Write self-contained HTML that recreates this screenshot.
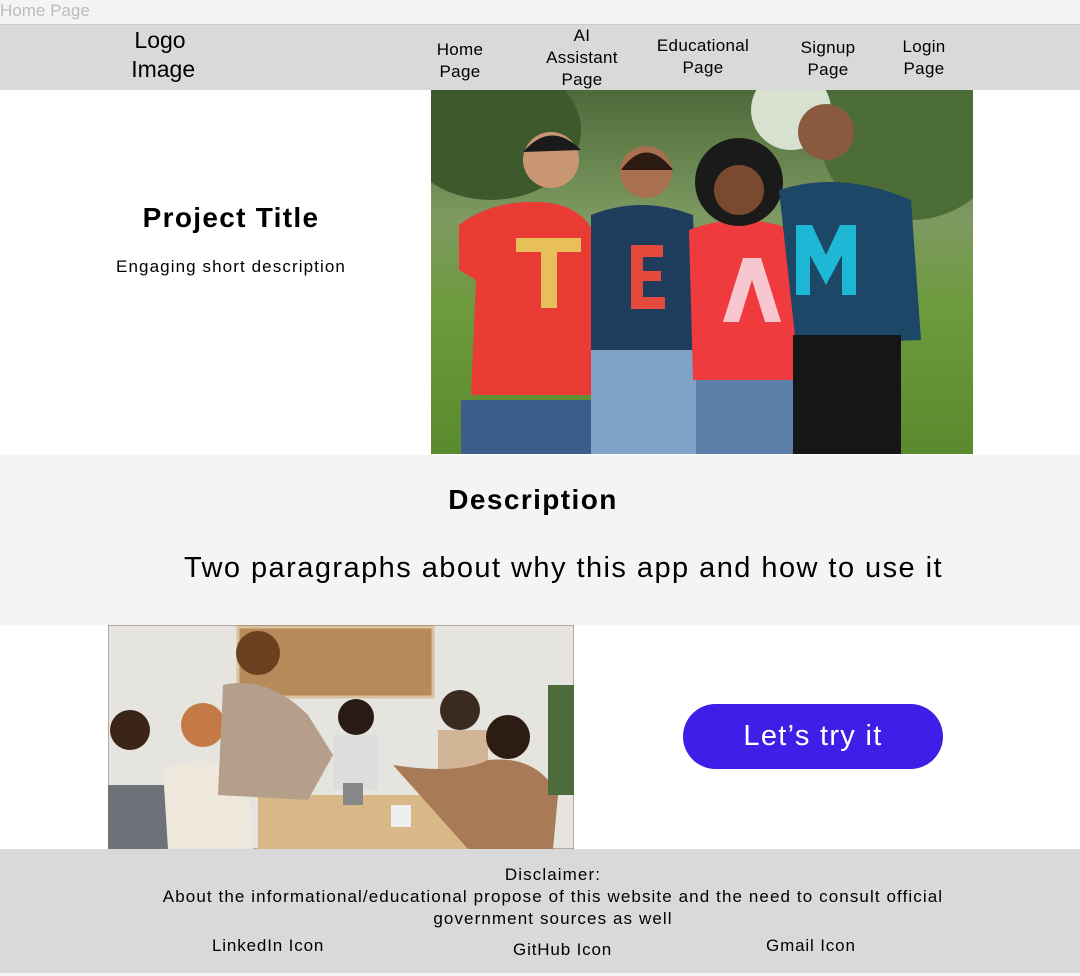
<!DOCTYPE html>
<html><head><meta charset="utf-8"><style>
*{margin:0;padding:0;box-sizing:border-box}
body{width:1080px;height:976px;background:#f4f4f4;font-family:"Liberation Sans",sans-serif;color:#000;position:relative;overflow:hidden}
.a{position:absolute}
.c{text-align:center;line-height:1.15}
</style></head><body>
<div class="a" style="left:0;top:1px;font-size:17px;color:#bbb">Home Page</div>
<div class="a" style="left:0;top:24px;width:1080px;height:66px;background:#d9d9d9;border-top:1px solid #ccc"></div>
<div class="a c" style="left:110px;top:26px;width:100px;font-size:23px;line-height:29px">Logo<br>&nbsp;Image</div>
<div class="a c" style="left:420px;top:39px;width:80px;font-size:17px;line-height:22px;letter-spacing:0.3px">Home<br>Page</div>
<div class="a c" style="left:537px;top:25px;width:90px;font-size:17px;line-height:22px;letter-spacing:0.3px">AI<br>Assistant<br>Page</div>
<div class="a c" style="left:648px;top:35px;width:110px;font-size:17px;line-height:22px;letter-spacing:0.3px">Educational<br>Page</div>
<div class="a c" style="left:788px;top:37px;width:80px;font-size:17px;line-height:22px;letter-spacing:0.3px">Signup<br>Page</div>
<div class="a c" style="left:884px;top:36px;width:80px;font-size:17px;line-height:22px;letter-spacing:0.3px">Login<br>Page</div>

<div class="a" style="left:0;top:90px;width:1080px;height:365px;background:#fff"></div>
<div class="a c" style="left:80px;top:202px;width:302px;font-size:28px;font-weight:bold;letter-spacing:1.3px">Project Title</div>
<div class="a c" style="left:80px;top:257px;width:302px;font-size:17px;letter-spacing:1.1px">Engaging short description</div>

<svg class="a" style="left:431px;top:90px" width="542" height="364">
<defs><linearGradient id="g" x1="0" y1="0" x2="0" y2="1"><stop offset="0" stop-color="#4c6b3a"/><stop offset="0.35" stop-color="#7e9a62"/><stop offset="0.6" stop-color="#6d9a3c"/><stop offset="1" stop-color="#5a8a2e"/></linearGradient></defs>
<rect width="542" height="364" fill="url(#g)"/>
<ellipse cx="60" cy="40" rx="90" ry="70" fill="#3e5a2c"/><ellipse cx="480" cy="50" rx="90" ry="80" fill="#4d6d36"/>
<ellipse cx="360" cy="20" rx="40" ry="40" fill="#d8e0d0"/>
<rect x="30" y="310" width="140" height="54" fill="#3a5d8a"/>
<path d="M28 135 Q60 110 110 112 Q160 115 168 160 L168 305 L40 305 L45 190 L28 180Z" fill="#e83c35"/>
<rect x="85" y="148" width="65" height="14" fill="#e8c05a"/><rect x="110" y="148" width="16" height="70" fill="#e8c05a"/>
<circle cx="120" cy="70" r="28" fill="#c89670"/><path d="M92 62 Q120 30 150 60 Z" fill="#1a1a1a"/>
<path d="M160 125 Q210 105 262 125 L268 265 L160 268Z" fill="#1f3e5e"/><rect x="160" y="260" width="105" height="104" fill="#7fa3c7"/>
<path d="M200 155 h32 v12 h-20 v14 h18 v10 h-18 v16 h22 v12 h-34z" fill="#e44a3c"/>
<circle cx="215" cy="82" r="26" fill="#a8704e"/><path d="M190 80 Q215 45 242 80 Z" fill="#2a1a12"/>
<path d="M258 140 Q310 120 362 140 L365 290 L262 290Z" fill="#ef3b3e"/><rect x="265" y="290" width="98" height="74" fill="#5b7fa8"/>
<path d="M292 232 L312 168 L330 168 L350 232 L334 232 L321 190 L308 232Z" fill="#f6c7cf"/>
<circle cx="308" cy="92" r="44" fill="#1a1a1a"/><circle cx="308" cy="100" r="25" fill="#7a4a30"/>
<path d="M348 100 Q410 80 480 110 L490 250 L365 255Z" fill="#1d4766"/><rect x="362" y="245" width="108" height="119" fill="#161616"/>
<path d="M365 135 h16 l14 30 l14 -30 h16 v70 h-14 v-40 l-16 30 l-16 -30 v40 h-14z" fill="#1fb7d6"/>
<circle cx="395" cy="42" r="28" fill="#8a5a3e"/>
</svg>

<div class="a" style="left:0;top:455px;width:1080px;height:170px;background:#f4f4f4"></div>
<div class="a c" style="left:0;top:484px;width:1066px;font-size:28px;font-weight:bold;letter-spacing:1.4px">Description</div>
<div class="a c" style="left:0;top:552px;width:1127px;font-size:29px;letter-spacing:1.45px">Two paragraphs about why this app and how to use it</div>

<div class="a" style="left:0;top:625px;width:1080px;height:224px;background:#fff"></div>
<svg class="a" style="left:108px;top:625px" width="466" height="224">
<rect width="466" height="224" fill="#e6e4df" stroke="#8a6a60"/>
<rect x="130" y="2" width="195" height="70" fill="#b88a5a" stroke="#d8c2a0" stroke-width="3"/>
<rect x="150" y="170" width="230" height="54" fill="#d9b888"/>
<circle cx="22" cy="105" r="20" fill="#3a2418"/><rect x="0" y="160" width="60" height="64" fill="#6d7378"/>
<circle cx="95" cy="100" r="22" fill="#c47a44"/><path d="M55 145 Q95 125 140 150 L145 224 L60 224Z" fill="#eee8dc"/>
<circle cx="150" cy="28" r="22" fill="#6a4020"/><path d="M115 60 Q160 50 200 90 L225 130 L200 175 L110 170Z" fill="#b59f8a"/>
<circle cx="248" cy="92" r="18" fill="#2a1a14"/><rect x="225" y="110" width="45" height="55" fill="#ddd"/>
<circle cx="352" cy="85" r="20" fill="#3a2a20"/><rect x="330" y="105" width="50" height="70" fill="#d2b596"/>
<circle cx="400" cy="112" r="22" fill="#2c1c14"/><path d="M285 140 Q350 150 380 135 Q430 130 450 170 L445 224 L360 224 Z" fill="#a87a55"/>
<rect x="440" y="60" width="26" height="110" fill="#4d6a3a"/>
<rect x="235" y="158" width="20" height="22" fill="#888"/><rect x="283" y="180" width="20" height="22" fill="#eee"/>
</svg>
<div class="a c" style="left:683px;top:704px;width:260px;height:65px;border-radius:33px;background:#3d1fe8;color:#fff;font-size:29px;line-height:65px;letter-spacing:1.3px">Let’s try it</div>

<div class="a" style="left:0;top:849px;width:1080px;height:124px;background:#d9d9d9"></div>
<div class="a c" style="left:0;top:864px;width:1106px;font-size:17px;line-height:22px;letter-spacing:1.1px">Disclaimer:<br>About the informational/educational propose of this website and the need to consult official<br>government sources as well</div>
<div class="a" style="left:212px;top:936px;font-size:17px;letter-spacing:0.85px">LinkedIn Icon</div>
<div class="a" style="left:513px;top:940px;font-size:17px;letter-spacing:0.85px">GitHub Icon</div>
<div class="a" style="left:766px;top:936px;font-size:17px;letter-spacing:0.85px">Gmail Icon</div>
</body></html>
